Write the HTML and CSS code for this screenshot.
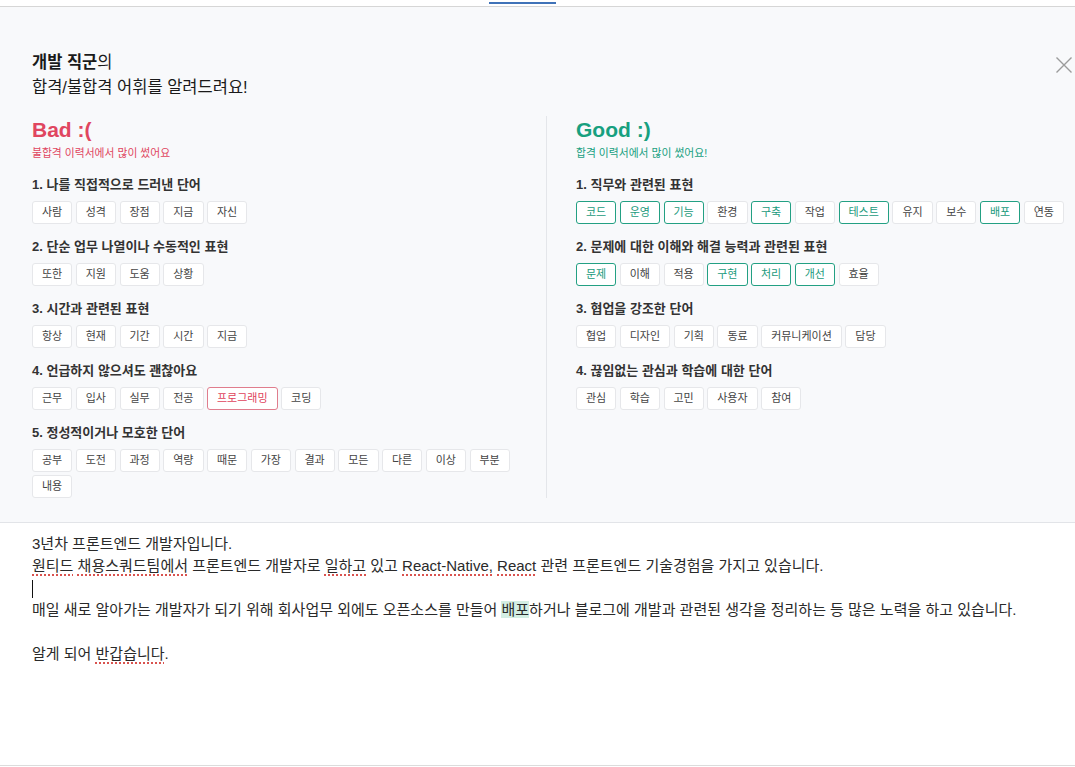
FILE: index.html
```html
<!DOCTYPE html>
<html lang="ko">
<head>
<meta charset="utf-8">
<title>합격/불합격 어휘</title>
<link rel="stylesheet" href="styles.css">
</head>
<body>
<div class="topbar"><div class="tab-indicator"></div></div>
<section class="panel">
  <div class="panel-head">
    <h2 class="title"><strong>개발 직군</strong>의<br>합격/불합격 어휘를 알려드려요!</h2>
    <button class="close" aria-label="닫기">
      <svg viewBox="0 0 16 16" width="16" height="16"><path d="M0.5 0.5L15.5 15.5M15.5 0.5L0.5 15.5" stroke="#9b9b9b" stroke-width="1.4" fill="none"/></svg>
    </button>
  </div>
  <div class="columns">
    <div class="col bad">
      <h3 class="col-title">Bad :(</h3>
      <p class="col-sub">불합격 이력서에서 많이 썼어요</p>
      <div class="group">
        <h4>1. 나를 직접적으로 드러낸 단어</h4>
        <ul class="tags"><li class="tag">사람</li><li class="tag">성격</li><li class="tag">장점</li><li class="tag">지금</li><li class="tag">자신</li></ul>
      </div>
      <div class="group">
        <h4>2. 단순 업무 나열이나 수동적인 표현</h4>
        <ul class="tags"><li class="tag">또한</li><li class="tag">지원</li><li class="tag">도움</li><li class="tag">상황</li></ul>
      </div>
      <div class="group">
        <h4>3. 시간과 관련된 표현</h4>
        <ul class="tags"><li class="tag">항상</li><li class="tag">현재</li><li class="tag">기간</li><li class="tag">시간</li><li class="tag">지금</li></ul>
      </div>
      <div class="group">
        <h4>4. 언급하지 않으셔도 괜찮아요</h4>
        <ul class="tags"><li class="tag">근무</li><li class="tag">입사</li><li class="tag">실무</li><li class="tag">전공</li><li class="tag hit-bad">프로그래밍</li><li class="tag">코딩</li></ul>
      </div>
      <div class="group">
        <h4>5. 정성적이거나 모호한 단어</h4>
        <ul class="tags"><li class="tag">공부</li><li class="tag">도전</li><li class="tag">과정</li><li class="tag">역량</li><li class="tag">때문</li><li class="tag">가장</li><li class="tag">결과</li><li class="tag">모든</li><li class="tag">다른</li><li class="tag">이상</li><li class="tag">부분</li><li class="tag">내용</li></ul>
      </div>
    </div>
    <div class="col good">
      <h3 class="col-title">Good :)</h3>
      <p class="col-sub">합격 이력서에서 많이 썼어요!</p>
      <div class="group">
        <h4>1. 직무와 관련된 표현</h4>
        <ul class="tags"><li class="tag hit-good">코드</li><li class="tag hit-good">운영</li><li class="tag hit-good">기능</li><li class="tag">환경</li><li class="tag hit-good">구축</li><li class="tag">작업</li><li class="tag hit-good">테스트</li><li class="tag">유지</li><li class="tag">보수</li><li class="tag hit-good">배포</li><li class="tag">연동</li></ul>
      </div>
      <div class="group">
        <h4>2. 문제에 대한 이해와 해결 능력과 관련된 표현</h4>
        <ul class="tags"><li class="tag hit-good">문제</li><li class="tag">이해</li><li class="tag">적용</li><li class="tag hit-good">구현</li><li class="tag hit-good">처리</li><li class="tag hit-good">개선</li><li class="tag">효율</li></ul>
      </div>
      <div class="group">
        <h4>3. 협업을 강조한 단어</h4>
        <ul class="tags"><li class="tag">협업</li><li class="tag">디자인</li><li class="tag">기획</li><li class="tag">동료</li><li class="tag">커뮤니케이션</li><li class="tag">담당</li></ul>
      </div>
      <div class="group">
        <h4>4. 끊임없는 관심과 학습에 대한 단어</h4>
        <ul class="tags"><li class="tag">관심</li><li class="tag">학습</li><li class="tag">고민</li><li class="tag">사용자</li><li class="tag">참여</li></ul>
      </div>
    </div>
  </div>
</section>
<div class="editor">
  <div class="line">3년차 프론트엔드 개발자입니다.</div>
  <div class="line"><span class="spell">원티드</span> <span class="spell">채용스쿼드팀에서</span> 프론트엔드 개발자로 <span class="spell">일하고</span> 있고 <span class="spell">React-Native,</span> <span class="spell">React</span> 관련 프론트엔드 기술경험을 가지고 있습니다.</div>
  <div class="line"><span class="caret"></span></div>
  <div class="line">매일 새로 알아가는 개발자가 되기 위해 회사업무 외에도 오픈소스를 만들어 <span class="mark">배포</span>하거나 블로그에 개발과 관련된 생각을 정리하는 등 많은 노력을 하고 있습니다.</div>
  <div class="line"><br></div>
  <div class="line">알게 되어 <span class="spell">반갑습니다</span>.</div>
</div>
</body>
</html>
```
FILE: styles.css
```css
html, body {
  margin: 0;
  padding: 0;
}
body {
  font-family: "Liberation Sans", "Noto Sans CJK KR", sans-serif;
  color: #222;
  background: #fff;
}
.topbar {
  height: 4px;
  border-bottom: 1px solid #d6d6d6;
}
.tab-indicator {
  margin-left: 489px;
  width: 67px;
  height: 2px;
  margin-top: 2px;
  background: #3f72b8;
}
.panel {
  background: #f8f9fb;
  padding: 43px 0 24px 32px;
  border-bottom: 1px solid #e2e4e8;
}
.panel-head {
  display: flex;
  justify-content: space-between;
  align-items: flex-start;
  margin-bottom: 16px;
}
.title {
  margin: 0;
  font-size: 16.5px;
  line-height: 25px;
  font-weight: 400;
  color: #1a1a1a;
}
.title strong {
  font-weight: 700;
}
.close {
  width: 16px;
  height: 16px;
  margin: 7px 3px 0 0;
  padding: 0;
  border: 0;
  background: none;
  display: block;
}
.close svg {
  display: block;
}
.columns {
  display: grid;
  grid-template-columns: 515px 1fr;
}
.bad {
  border-right: 1px solid #e4e6ea;
}
.good {
  padding-left: 29px;
}
.col-title {
  margin: 0;
  font-size: 21px;
  line-height: 28px;
  font-weight: 700;
}
.col-sub {
  margin: 0;
  font-size: 10.8px;
  line-height: 18px;
}
.bad .col-title,
.bad .col-sub {
  color: #e0465f;
}
.good .col-title,
.good .col-sub {
  color: #17a07f;
}
.group {
  margin-top: 13px;
}
.group h4 {
  margin: 0 0 6px;
  font-size: 13px;
  line-height: 20px;
  font-weight: 600;
  color: #333;
}
.tags {
  list-style: none;
  margin: 0;
  padding: 0;
  display: flex;
  flex-wrap: wrap;
  gap: 3px 3.5px;
}
.tag {
  height: 23px;
  box-sizing: border-box;
  padding: 0 9px;
  border: 1px solid #e6e7ea;
  border-radius: 3px;
  background: #fff;
  font-size: 11px;
  line-height: 21px;
  color: #444;
}
.tag.hit-good {
  border-color: #23a083;
  color: #1b9a7c;
}
.tag.hit-bad {
  border-color: #e07d8d;
  color: #e0435c;
}
.editor {
  min-height: 243px;
  box-sizing: border-box;
  padding: 10px 32px;
  font-size: 15px;
  line-height: 22px;
  color: #2a2a2a;
  border-bottom: 1px solid #dcdcdc;
}
.spell {
  text-decoration: underline dotted #d9534f;
  text-decoration-thickness: 1.5px;
  text-underline-offset: 3px;
}
.mark {
  background: #d3eee3;
}
.caret {
  display: inline-block;
  width: 1px;
  height: 18px;
  background: #111;
  vertical-align: middle;
}
```
